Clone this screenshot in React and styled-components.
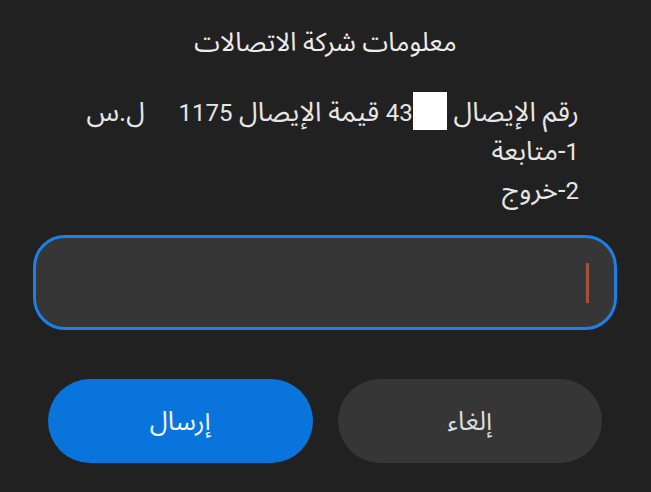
import React from 'react';
import styled, { createGlobalStyle } from 'styled-components';

const GlobalStyle = createGlobalStyle`
  html, body {
    margin: 0;
    padding: 0;
    background: #212121;
  }
  body {
    font-family: Roboto, "Noto Sans Arabic", "Noto Sans", "DejaVu Sans", sans-serif;
    color: #e8e8e8;
  }
`;

const Dialog = styled.div`
  width: 651px;
  height: 492px;
  box-sizing: border-box;
  padding-top: 26px;
  display: flex;
  flex-direction: column;
  background: #212121;
`;

const Title = styled.h2`
  margin: 0;
  font-size: 26px;
  font-weight: 400;
  line-height: 32px;
  text-align: center;
  color: #ececec;
  direction: rtl;
`;

const Message = styled.div`
  direction: rtl;
  margin-top: 34px;
  padding-right: 72px;
  font-size: 27px;
  line-height: 38px;
  color: #e6e6e6;
  white-space: pre;
`;

const Num = styled.span`
  font-size: 24px;
`;

const Redacted = styled.span`
  display: inline-block;
  width: 34px;
  height: 38px;
  background: #ffffff;
  vertical-align: -9px;
`;

const InputField = styled.div`
  margin: 25px 34px 0 33px;
  height: 95px;
  box-sizing: border-box;
  border: 3px solid #1e80e6;
  border-radius: 32px;
  background: #363636;
  display: flex;
  align-items: center;
  justify-content: flex-end;
  padding-right: 25px;
`;

const Caret = styled.span`
  width: 3px;
  height: 40px;
  background: #a4513b;
`;

const Actions = styled.div`
  direction: rtl;
  display: flex;
  gap: 25px;
  margin: 49px 49px 0 48px;
`;

const Button = styled.button`
  flex: 1;
  height: 84px;
  border: none;
  border-radius: 42px;
  font-family: inherit;
  font-size: 26px;
  background: ${(p) => (p.$primary ? '#0a74dd' : '#363636')};
  color: ${(p) => (p.$primary ? '#f4f4f4' : '#dcdcdc')};
`;

export default function App() {
  return (
    <>
      <GlobalStyle />
      <Dialog>
        <Title>معلومات شركة الاتصالات</Title>
        <Message>
          <div>
            رقم الإيصال <Redacted /><Num>43</Num> قيمة الإيصال <Num>1175</Num>     ل.س
          </div>
          <div><Num>1</Num>-متابعة</div>
          <div><Num>2</Num>-خروج</div>
        </Message>
        <InputField>
          <Caret />
        </InputField>
        <Actions>
          <Button>إلغاء</Button>
          <Button $primary>إرسال</Button>
        </Actions>
      </Dialog>
    </>
  );
}
